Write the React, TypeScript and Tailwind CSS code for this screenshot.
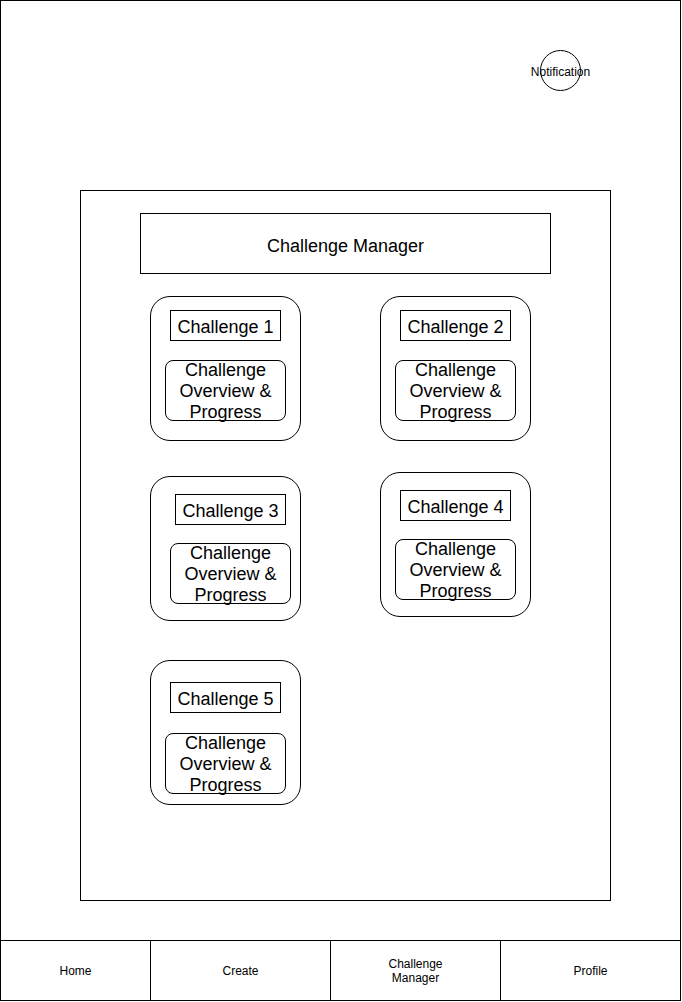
import React from 'react';

interface Challenge {
  name: string;
  cardClass: string;
  labelClass: string;
  bodyClass: string;
}

const leftColumn: Challenge[] = [
  { name: 'Challenge 1', cardClass: '', labelClass: 'ml-[19px] mt-[13px]', bodyClass: 'ml-[14px] mt-[19px]' },
  { name: 'Challenge 3', cardClass: 'mt-[35px]', labelClass: 'ml-[24px] mt-[17px]', bodyClass: 'ml-[19px] mt-[18px]' },
  { name: 'Challenge 5', cardClass: 'mt-[39px]', labelClass: 'ml-[19px] mt-[21px]', bodyClass: 'ml-[14px] mt-[20px]' },
];

const rightColumn: Challenge[] = [
  { name: 'Challenge 2', cardClass: '', labelClass: 'ml-[19px] mt-[13px]', bodyClass: 'ml-[14px] mt-[19px]' },
  { name: 'Challenge 4', cardClass: 'mt-[31px]', labelClass: 'ml-[19px] mt-[17px]', bodyClass: 'ml-[14px] mt-[18px]' },
];

const navItems = [
  { label: 'Home', width: 'w-[149px]' },
  { label: 'Create', width: 'w-[180px] border-l border-black' },
  { label: 'Challenge\nManager', width: 'w-[170px] border-l border-black' },
  { label: 'Profile', width: 'w-[180px] border-l border-black' },
];

function ChallengeCard({ challenge }: { challenge: Challenge }) {
  return (
    <div className={`w-[151px] h-[145px] border border-black rounded-[20px] flex flex-col ${challenge.cardClass}`}>
      <div className={`w-[111px] h-[31px] border border-black flex items-center justify-center pt-[4px] ${challenge.labelClass}`}>
        {challenge.name}
      </div>
      <div
        className={`w-[121px] h-[61px] border border-black rounded-[8px] flex items-center justify-center text-center leading-[21px] pt-[2px] ${challenge.bodyClass}`}
      >
        <span>
          Challenge
          <br />
          Overview &amp;
          <br />
          Progress
        </span>
      </div>
    </div>
  );
}

export default function App() {
  return (
    <div
      className="w-[681px] h-[1001px] border border-black bg-white text-black flex flex-col"
      style={{ fontFamily: '"Liberation Sans", Arial, sans-serif' }}
    >
      {/* Header with notification bubble */}
      <div className="h-[189px] shrink-0">
        <div className="ml-[539px] mt-[49px] w-[41px] h-[41px] rounded-full border border-black flex items-center justify-center whitespace-nowrap text-[12px] pt-[2px]">
          Notification
        </div>
      </div>

      {/* Main panel */}
      <div className="ml-[79px] w-[531px] h-[711px] shrink-0 border border-black text-[18px]">
        <div className="ml-[59px] mt-[22px] w-[411px] h-[61px] border border-black flex items-center justify-center pt-[6px]">
          Challenge Manager
        </div>

        <div className="flex mt-[22px] ml-[69px]">
          <div className="flex flex-col">
            {leftColumn.map((c) => (
              <ChallengeCard key={c.name} challenge={c} />
            ))}
          </div>
          <div className="flex flex-col ml-[79px]">
            {rightColumn.map((c) => (
              <ChallengeCard key={c.name} challenge={c} />
            ))}
          </div>
        </div>
      </div>

      {/* Bottom navigation */}
      <div className="mt-auto h-[60px] shrink-0 border-t border-black flex text-[12px]">
        {navItems.map((item) => (
          <div
            key={item.label}
            className={`${item.width} h-full flex items-center justify-center text-center leading-[14px] whitespace-pre-line`}
          >
            {item.label}
          </div>
        ))}
      </div>
    </div>
  );
}
